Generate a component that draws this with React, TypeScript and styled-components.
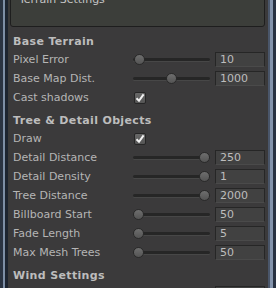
import { createGlobalStyle } from "styled-components";
import styled from "styled-components";

const GlobalStyle = createGlobalStyle`
  html, body {
    margin: 0;
    padding: 0;
    background: #263040;
  }
  body {
    font-family: "DejaVu Sans", "Liberation Sans", sans-serif;
    font-size: 11px;
  }
`;

type Item =
  | { kind: "header"; title: string }
  | { kind: "slider"; label: string; value: string; pos: number }
  | { kind: "check"; label: string; checked: boolean };

const items: Item[] = [
  { kind: "header", title: "Base Terrain" },
  { kind: "slider", label: "Pixel Error", value: "10", pos: 0.02 },
  { kind: "slider", label: "Base Map Dist.", value: "1000", pos: 0.5 },
  { kind: "check", label: "Cast shadows", checked: true },
  { kind: "header", title: "Tree & Detail Objects" },
  { kind: "check", label: "Draw", checked: true },
  { kind: "slider", label: "Detail Distance", value: "250", pos: 1 },
  { kind: "slider", label: "Detail Density", value: "1", pos: 1 },
  { kind: "slider", label: "Tree Distance", value: "2000", pos: 1 },
  { kind: "slider", label: "Billboard Start", value: "50", pos: 0 },
  { kind: "slider", label: "Fade Length", value: "5", pos: 0 },
  { kind: "slider", label: "Max Mesh Trees", value: "50", pos: 0 },
  { kind: "header", title: "Wind Settings" },
  { kind: "slider", label: "Speed", value: "1", pos: 1 },
];

export default function App() {
  return (
    <>
      <GlobalStyle />
      <Window>
        <LeftFrame />
        <Panel>
          <TitleBox>Terrain Settings</TitleBox>
          {items.map((item, i) => {
            if (item.kind === "header") {
              return <Header key={i}>{item.title}</Header>;
            }
            if (item.kind === "check") {
              return (
                <Row key={i}>
                  <Label>{item.label}</Label>
                  <CheckBox>
                    {item.checked && (
                      <svg width="10" height="10" viewBox="0 0 10 10">
                        <path
                          d="M1.5 5.2 L4 7.8 L8.6 1.4"
                          fill="none"
                          stroke="#f2f2f2"
                          strokeWidth="2"
                        />
                      </svg>
                    )}
                  </CheckBox>
                </Row>
              );
            }
            return (
              <Row key={i}>
                <Label>{item.label}</Label>
                <Slider>
                  <Track />
                  <Thumb style={{ left: `${item.pos * 66}px` }} />
                </Slider>
                <Field>{item.value}</Field>
              </Row>
            );
          })}
        </Panel>
        <RightFrame />
      </Window>
    </>
  );
}

const Window = styled.div`
  display: flex;
  width: 276px;
  height: 288px;
  overflow: hidden;
`;

const LeftFrame = styled.div`
  width: 8px;
  flex: none;
  background: linear-gradient(
    to right,
    #2a3342 0,
    #2a3342 3px,
    #7d8ea6 3px,
    #7d8ea6 5px,
    #1d2430 5px
  );
`;

const RightFrame = styled.div`
  width: 8px;
  flex: none;
  background: linear-gradient(
    to right,
    #4a566a 0,
    #4a566a 2px,
    #8494ac 2px,
    #8494ac 5px,
    #283242 5px
  );
`;

const Panel = styled.div`
  flex: 1;
  background: #3b3a3b;
  padding: 0 3px 0 5px;
  overflow: hidden;
  color: #b5b5b5;
`;

const TitleBox = styled.div`
  margin: -15px 0 2px -3px;
  padding: 7px 0 0 8px;
  box-sizing: border-box;
  height: 42px;
  border: 1px solid #1e1e1e;
  border-radius: 3px;
  background: #3c3e3a;
  color: #c4c4c4;
  line-height: 14px;
`;

const Header = styled.div`
  height: 22px;
  box-sizing: border-box;
  padding-top: 6px;
  line-height: 14px;
  font-weight: bold;
  letter-spacing: 0.35px;
  color: #bdbdbd;
  white-space: nowrap;
`;

const Row = styled.div`
  display: flex;
  align-items: center;
  height: 19px;
`;

const Label = styled.div`
  flex: none;
  width: 120px;
  white-space: nowrap;
  line-height: 14px;
  margin-top: -1px;
`;

const Slider = styled.div`
  position: relative;
  flex: none;
  width: 77px;
  height: 11px;
  margin-top: -2px;
`;

const Track = styled.div`
  position: absolute;
  left: 0;
  right: 0;
  top: 4px;
  height: 3px;
  border-radius: 2px;
  background: #262626;
  box-shadow: 0 1px 0 #474747;
`;

const Thumb = styled.div`
  position: absolute;
  top: 0;
  width: 11px;
  height: 11px;
  box-sizing: border-box;
  border-radius: 50%;
  border: 1px solid #2a2a2a;
  background: linear-gradient(#6e6e6e, #545454);
`;

const Field = styled.div`
  flex: none;
  width: 50px;
  height: 15px;
  box-sizing: border-box;
  margin: -2px 0 0 5px;
  padding-left: 4px;
  border: 1px solid #262626;
  border-bottom-color: #4a4a4a;
  background: #414141;
  line-height: 13px;
  color: #bdbdbd;
`;

const CheckBox = styled.div`
  width: 12px;
  height: 12px;
  box-sizing: border-box;
  margin-left: 1px;
  margin-top: -2px;
  border: 1px solid #262626;
  border-radius: 2px;
  background: linear-gradient(#686868, #555555);
  display: flex;
  align-items: center;
  justify-content: center;
`;
